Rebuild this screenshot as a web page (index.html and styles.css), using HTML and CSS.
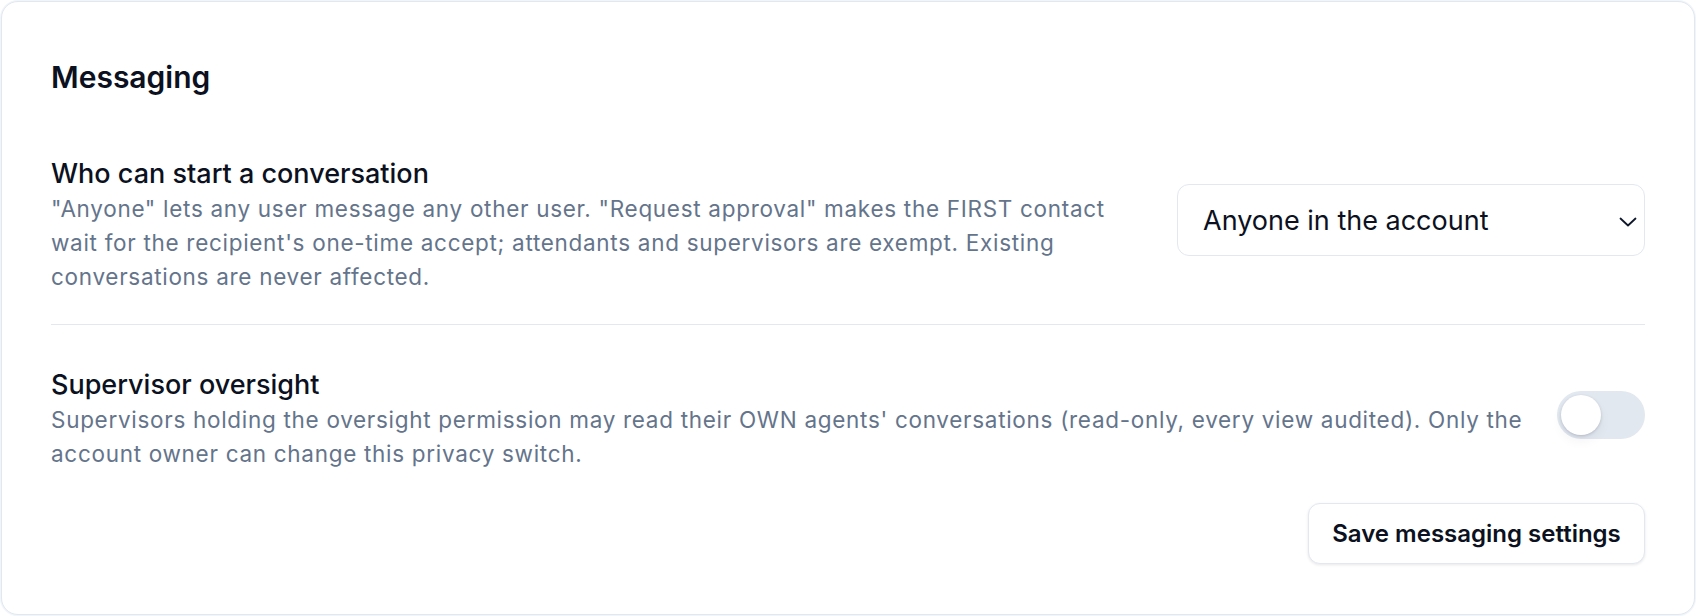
FILE: index.html
```html
<!DOCTYPE html>
<html lang="en">
<head>
<meta charset="utf-8">
<title>Messaging settings</title>
<link rel="stylesheet" href="styles.css">
</head>
<body>
<div class="page">
  <section class="card">
    <h2 class="card-title">Messaging</h2>

    <div class="setting setting-first">
      <div class="setting-text">
        <div class="setting-label">Who can start a conversation</div>
        <p class="setting-desc">"Anyone" lets any user message any other user. "Request approval" makes the FIRST contact wait for the recipient's one-time accept; attendants and supervisors are exempt. Existing conversations are never affected.</p>
      </div>
      <div class="select">
        <span class="select-value">Anyone in the account</span>
        <svg class="chevron" width="18" height="10" viewBox="0 0 18 10" aria-hidden="true">
          <path d="M1.5 1.5 L9 8.5 L16.5 1.5" fill="none" stroke="#0f172a" stroke-width="1.8" stroke-linecap="round" stroke-linejoin="round"/>
        </svg>
      </div>
    </div>

    <div class="divider"></div>

    <div class="setting setting-second">
      <div class="setting-text">
        <div class="setting-label">Supervisor oversight</div>
        <p class="setting-desc">Supervisors holding the oversight permission may read their OWN agents' conversations (read-only, every view audited). Only the account owner can change this privacy switch.</p>
      </div>
      <div class="toggle" role="switch" aria-checked="false">
        <span class="toggle-knob"></span>
      </div>
    </div>

    <div class="actions">
      <button class="btn" type="button">Save messaging settings</button>
    </div>
  </section>
</div>
</body>
</html>
```

FILE: styles.css
```css
* {
  box-sizing: border-box;
}

html, body {
  margin: 0;
  padding: 0;
  background: #ffffff;
}

body {
  font-family: Inter, "Noto Sans", "Liberation Sans", sans-serif;
  color: #0f172a;
}

.page {
  padding: 1px;
}

.card {
  height: 614px;
  border: 1px solid #e2e8f0;
  border-radius: 17px;
  box-shadow: 0 0 0 1px #f1f5f9, 0 1px 2px rgba(15, 23, 42, 0.04);
  background: #ffffff;
  padding: 55px 49px 51px 49px;
  display: flex;
  flex-direction: column;
}

.card > * {
  flex-shrink: 0;
}

.card-title {
  margin: 0;
  font-size: 30px;
  line-height: 40px;
  font-weight: 600;
  color: #0b1120;
}

.setting {
  display: flex;
  align-items: center;
}

.setting-first {
  gap: 40px;
  padding-top: 59px;
  padding-bottom: 30px;
}

.setting-second {
  gap: 24px;
  padding-top: 42px;
}

.setting-text {
  flex: 1;
  min-width: 0;
}

.setting-label {
  font-size: 27px;
  line-height: 36px;
  font-weight: 500;
  color: #0b1120;
}

.setting-desc {
  margin: 0;
  font-size: 22.5px;
  line-height: 34px;
  letter-spacing: 0.7px;
  color: #64748b;
}

.select {
  flex: 0 0 468px;
  height: 72px;
  margin-bottom: 10px;
  border: 1.5px solid #e2e8f0;
  border-radius: 12px;
  display: flex;
  align-items: center;
  justify-content: space-between;
  padding: 0 7px 0 25px;
  background: #ffffff;
}

.select-value {
  font-size: 27px;
  color: #0b1120;
}

.chevron {
  display: block;
  margin-top: 4px;
}

.divider {
  height: 1px;
  background: #e2e8f0;
}

.toggle {
  flex: 0 0 88px;
  height: 48px;
  border-radius: 24px;
  background: #e2e8f0;
  padding: 4px;
  display: flex;
  align-items: center;
  margin-top: -8px;
}

.toggle-knob {
  width: 40px;
  height: 40px;
  border-radius: 50%;
  background: #ffffff;
  box-shadow: 0 1px 3px rgba(15, 23, 42, 0.18), 0 6px 12px rgba(15, 23, 42, 0.05);
}

.actions {
  display: flex;
  justify-content: flex-end;
  margin-top: 32px;
}

.btn {
  width: 337px;
  height: 61px;
  border: 1.5px solid #e2e8f0;
  border-radius: 12px;
  background: #ffffff;
  box-shadow: 0 1px 3px rgba(15, 23, 42, 0.1);
  font-family: Inter, "Noto Sans", "Liberation Sans", sans-serif;
  font-size: 24px;
  font-weight: 600;
  color: #0b1120;
  padding: 0;
  cursor: pointer;
}
```
